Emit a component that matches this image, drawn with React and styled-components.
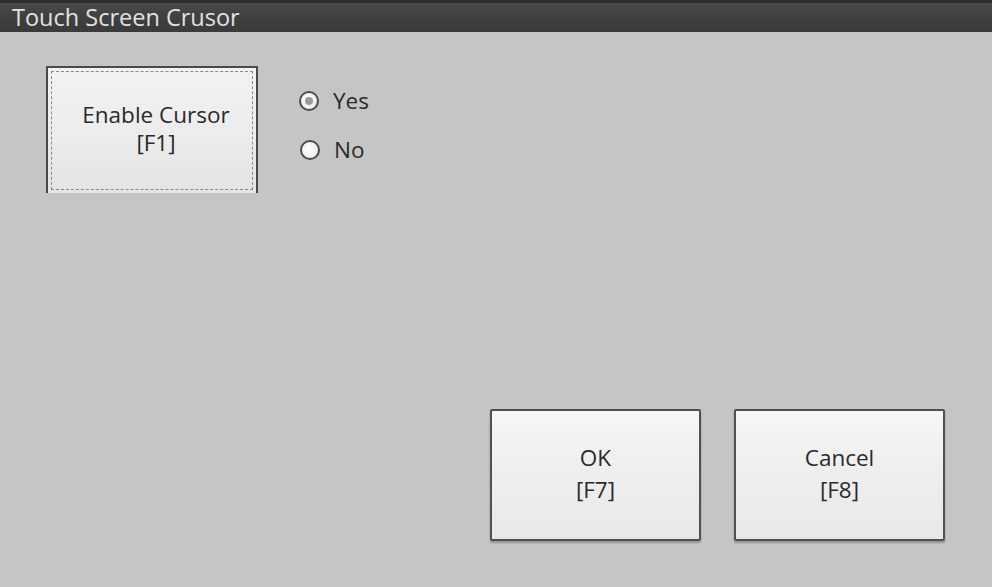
import React, { useState } from 'react';
import styled, { createGlobalStyle } from 'styled-components';

const GlobalStyle = createGlobalStyle`
  html, body {
    margin: 0;
    padding: 0;
    background: #c5c5c5;
  }
  body {
    font-family: 'Open Sans', 'Noto Sans', sans-serif;
  }
`;

const Window = styled.div`
  width: 992px;
  height: 587px;
  display: flex;
  flex-direction: column;
  background: #c5c5c5;
  overflow: hidden;
`;

const TitleBar = styled.div`
  height: 29px;
  border-top: 3px solid #2e2e2e;
  background: linear-gradient(#4a4a4a, #414141 40%, #3a3a3a);
  display: flex;
  align-items: center;
  padding-left: 12px;
  color: #e2e2e2;
  font-size: 23.5px;
  line-height: 29px;
`;

const Body = styled.div`
  flex: 1;
  display: flex;
  flex-direction: column;
  justify-content: space-between;
  padding: 34px 47px 46px 46px;
`;

const TopRow = styled.div`
  display: flex;
  align-items: flex-start;
`;

const ToggleButton = styled.button`
  width: 212px;
  height: 127px;
  padding: 3px;
  border: 2px solid #4a4a4a;
  border-bottom: none;
  background: linear-gradient(#f2f2f2, #ececec 55%, #e4e4e4);
  font-family: inherit;
  cursor: pointer;
  display: flex;
`;

const FocusRect = styled.span`
  flex: 1;
  display: flex;
  flex-direction: column;
  align-items: center;
  justify-content: center;
  border: 1px dashed #8a8a8a;
  color: #2a2a2a;
  font-size: 22.5px;
  line-height: 28px;
  padding-left: 8px;
  padding-bottom: 4px;
`;

const RadioGroup = styled.div`
  margin-left: 41px;
  margin-top: 20px;
  display: flex;
  flex-direction: column;
  gap: 20px;
`;

const RadioRow = styled.label`
  display: flex;
  align-items: center;
  gap: 14px;
  font-size: 22.5px;
  color: #2a2a2a;
  height: 29px;
  cursor: pointer;
`;

const RadioCircle = styled.span`
  width: 16px;
  height: 16px;
  border-radius: 50%;
  border: 2px solid #4c4c4c;
  background: radial-gradient(circle at 40% 40%, #ffffff, #e6e6e6);
  display: flex;
  align-items: center;
  justify-content: center;
  margin-left: ${(p) => p.$shift || 0}px;

  &::after {
    content: '';
    width: 8px;
    height: 8px;
    border-radius: 50%;
    background: ${(p) => (p.$checked ? '#9a9a9a' : 'transparent')};
  }
`;

const BottomRow = styled.div`
  display: flex;
  justify-content: flex-end;
  gap: 33px;
`;

const ActionButton = styled.button`
  width: 211px;
  height: 132px;
  border: 2px solid #505050;
  border-radius: 2px;
  background: linear-gradient(#f6f6f6, #eeeeee 50%, #e8e8e8);
  box-shadow: 0 2px 2px rgba(0, 0, 0, 0.25);
  font-family: inherit;
  font-size: 22.5px;
  line-height: 32px;
  color: #2a2a2a;
  display: flex;
  flex-direction: column;
  align-items: center;
  justify-content: center;
  padding-bottom: 4px;
  cursor: pointer;
`;

export default function App() {
  const [enabled, setEnabled] = useState(true);

  return (
    <>
      <GlobalStyle />
      <Window>
        <TitleBar>Touch Screen Crusor</TitleBar>
        <Body>
          <TopRow>
            <ToggleButton onClick={() => setEnabled(!enabled)}>
              <FocusRect>
                <span>Enable Cursor</span>
                <span>[F1]</span>
              </FocusRect>
            </ToggleButton>
            <RadioGroup>
              <RadioRow onClick={() => setEnabled(true)}>
                <RadioCircle $checked={enabled} />
                Yes
              </RadioRow>
              <RadioRow onClick={() => setEnabled(false)}>
                <RadioCircle $checked={!enabled} $shift={1} />
                No
              </RadioRow>
            </RadioGroup>
          </TopRow>
          <BottomRow>
            <ActionButton>
              <span>OK</span>
              <span>[F7]</span>
            </ActionButton>
            <ActionButton>
              <span>Cancel</span>
              <span>[F8]</span>
            </ActionButton>
          </BottomRow>
        </Body>
      </Window>
    </>
  );
}
